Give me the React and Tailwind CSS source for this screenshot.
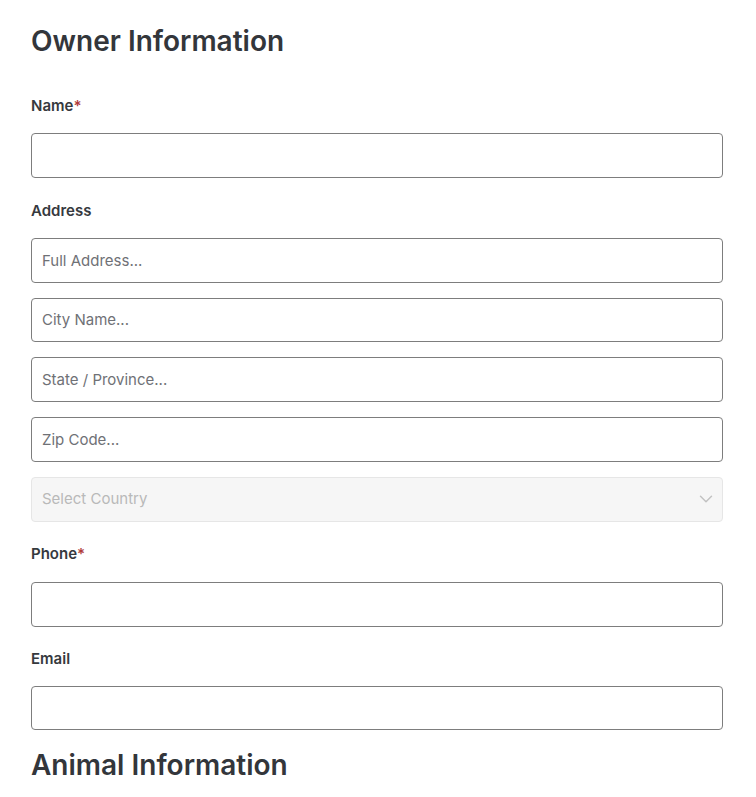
import React from "react";

const Label = ({ children, required }) => (
  <label className="block text-[15px] leading-5 font-semibold text-[#36393e]">
    {children}
    {required && <span className="text-[#b03a3a]">*</span>}
  </label>
);

const Input = ({ placeholder }) => (
  <input
    type="text"
    placeholder={placeholder}
    className="block w-full h-[44.8px] px-[10px] rounded-[4px] border border-[#7d7d7d] bg-white text-[15px] text-[#33363b] placeholder:text-[#6f7176] outline-none"
  />
);

export default function App() {
  return (
    <div className="min-h-screen bg-white font-['Inter',sans-serif] pl-[31px] pr-[33px] pt-[24px]">
      <h2 className="text-[28px] leading-[34px] font-semibold text-[#33363b]">
        Owner Information
      </h2>

      <div className="mt-[38px]">
        <Label required>Name</Label>
        <div className="mt-[17px]">
          <Input />
        </div>
      </div>

      <div className="mt-[23px]">
        <Label>Address</Label>
        <div className="mt-[17px] flex flex-col gap-[15px]">
          <Input placeholder="Full Address..." />
          <Input placeholder="City Name..." />
          <Input placeholder="State / Province..." />
          <Input placeholder="Zip Code..." />
          <div className="relative">
            <select
              disabled
              defaultValue=""
              className="block w-full h-[44.8px] px-[10px] rounded-[4px] border border-[#e6e6e6] bg-[#f6f6f6] text-[15px] text-[#b9b9b9] appearance-none outline-none"
            >
              <option value="">Select Country</option>
            </select>
            <svg
              className="absolute right-[6px] top-1/2 -translate-y-1/2 pointer-events-none"
              width="22"
              height="22"
              viewBox="0 0 24 24"
              fill="none"
              stroke="#c2c2c2"
              strokeWidth="1.6"
              strokeLinecap="round"
              strokeLinejoin="round"
            >
              <path d="M6 9l6 6 6-6" />
            </svg>
          </div>
        </div>
      </div>

      <div className="mt-[22px]">
        <Label required>Phone</Label>
        <div className="mt-[18px]">
          <Input />
        </div>
      </div>

      <div className="mt-[22px]">
        <Label>Email</Label>
        <div className="mt-[17px]">
          <Input />
        </div>
      </div>

      <h2 className="mt-[18px] text-[28px] leading-[34px] font-semibold text-[#33363b]">
        Animal Information
      </h2>
    </div>
  );
}
